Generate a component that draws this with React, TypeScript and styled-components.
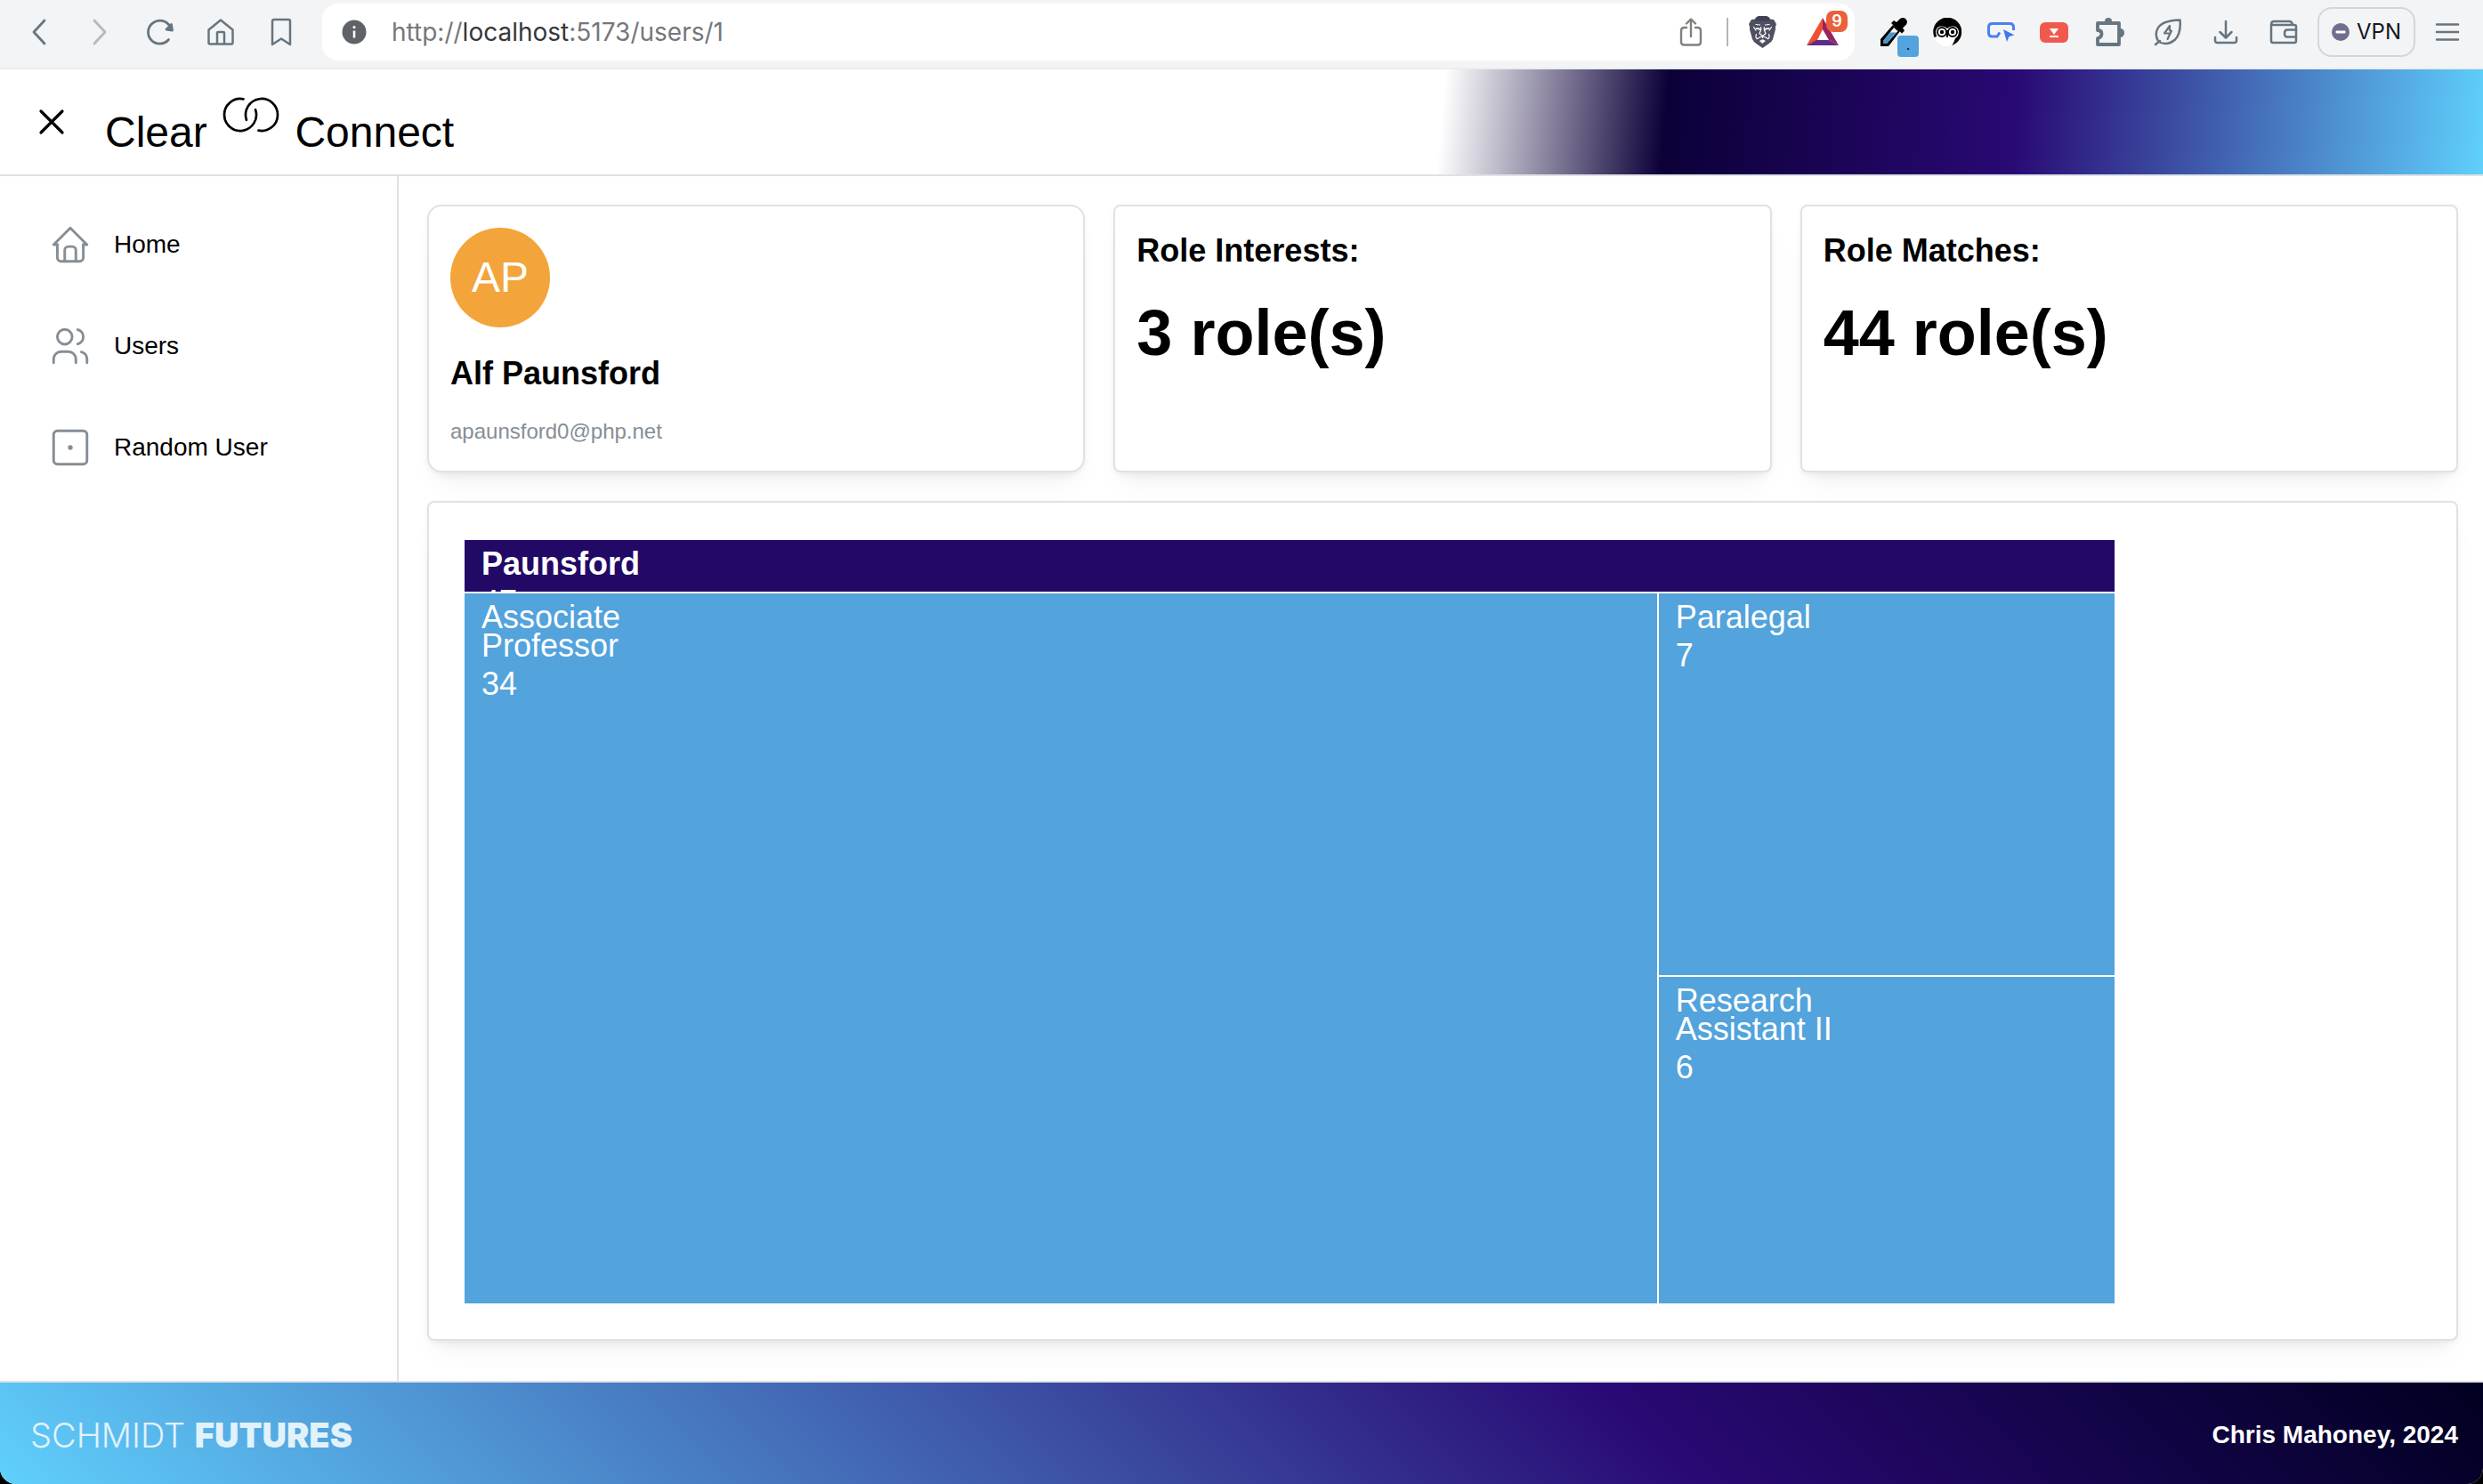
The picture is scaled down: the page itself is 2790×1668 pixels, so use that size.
import React from "react";
import styled, { createGlobalStyle } from "styled-components";

const GlobalStyle = createGlobalStyle`
  *, *::before, *::after { box-sizing: border-box; }
  html { background: #000; }
  body {
    margin: 0;
    font-family: "Liberation Sans", Arial, Helvetica, sans-serif;
    color: #000;
  }
  button { font: inherit; color: inherit; background: none; border: 0; padding: 0; cursor: pointer; }
  svg { display: block; }
`;

const line = "#dee2e6";
const chrome = "#66757f";

/* ---------- window ---------- */

const Window = styled.div`
  display: flex;
  flex-direction: column;
  min-height: 100vh;
  background: #fff;
  border-radius: 0 0 18px 18px;
  overflow: hidden;
`;

const Toolbar = styled.nav`
  display: flex;
  align-items: center;
  height: 78px;
  padding: 4px 4px 8px 10px;
  background: #f3f4f6;
  border-bottom: 2px solid #ecedf0;
  color: ${chrome};
  font-family: Inter, "Liberation Sans", sans-serif;
`;

const ToolButton = styled.button<{ $width?: number; $faded?: boolean }>`
  display: flex;
  align-items: center;
  justify-content: center;
  position: relative;
  flex: none;
  width: ${(p) => p.$width ?? 68}px;
  height: 64px;
  opacity: ${(p) => (p.$faded ? 0.45 : 1)};
`;

const AddressBar = styled.div`
  display: flex;
  align-items: center;
  flex: 1;
  min-width: 0;
  height: 64px;
  margin: 0 14px 0 12px;
  padding: 0 2px 0 22px;
  background: #fff;
  border-radius: 18px;
`;

const Url = styled.div`
  flex: 1;
  min-width: 0;
  margin-left: 28px;
  overflow: hidden;
  white-space: nowrap;
  font-size: 28px;
  line-height: 36px;
  color: #75777a;
  outline: none;
`;

const Host = styled.span`
  color: #36383b;
`;

const BarDivider = styled.span`
  width: 2px;
  height: 32px;
  margin: 0 4px 0 6px;
  background: #b6b6b6;
`;

const CountBadge = styled.span`
  position: absolute;
  top: 8px;
  right: 6px;
  width: 24px;
  height: 24px;
  border-radius: 8px;
  background: #e8613c;
  color: #fff;
  font-size: 18px;
  font-weight: 600;
  line-height: 24px;
  text-align: center;
`;

const ColorBadge = styled.span`
  position: absolute;
  right: 2px;
  bottom: 4px;
  width: 24px;
  height: 24px;
  border-radius: 4px;
  background: #53a3dc;
  color: #111;
  font-size: 16px;
  line-height: 20px;
  text-align: center;
`;

const VpnButton = styled.button`
  display: flex;
  align-items: center;
  justify-content: center;
  gap: 8px;
  width: 110px;
  height: 56px;
  margin-left: 6px;
  border: 2px solid #cfd8dd;
  border-radius: 16px;
  color: #15171c;
  font-size: 24px;
  line-height: 32px;
`;

/* ---------- application ---------- */

const Header = styled.header`
  display: flex;
  align-items: center;
  gap: 38px;
  height: 120px;
  padding: 0 36px;
  border-bottom: 2px solid ${line};
  background: linear-gradient(95deg, #fff 58%, #0c0038 67%, #290974 81%, #5fd0fc 100%);
  background-clip: padding-box;
`;

const CloseButton = styled.button`
  display: flex;
  align-items: center;
  justify-content: center;
  width: 44px;
  height: 44px;
`;

const Brand = styled.h1`
  margin: 0;
  font-size: 48px;
  font-weight: 400;
  line-height: 64px;
  white-space: nowrap;

  svg { display: inline-block; vertical-align: baseline; }
`;

const Body = styled.div`
  display: grid;
  grid-template-columns: 448px minmax(0, 1fr);
  flex: 1;
`;

const Sidebar = styled.aside`
  padding: 20px 0;
  border-right: 2px solid ${line};
`;

const NavLink = styled.a`
  display: flex;
  align-items: center;
  gap: 24px;
  height: 114px;
  padding: 0 54px;
  color: #000;
  font-size: 28px;
  line-height: 40px;
  text-decoration: none;

  svg { color: #868e96; }
`;

const Main = styled.main`
  display: flex;
  flex-direction: column;
  gap: 32px;
  padding: 32px 28px 45px 32px;
`;

const CardRow = styled.div`
  display: grid;
  grid-template-columns: repeat(3, minmax(0, 1fr));
  gap: 32px;
`;

const Card = styled.section<{ $radius?: number }>`
  padding: 24px;
  background: #fff;
  border: 2px solid ${line};
  border-radius: ${(p) => p.$radius ?? 8}px;
  box-shadow:
    0 2px 6px rgba(0, 0, 0, 0.05),
    0 20px 30px -10px rgba(0, 0, 0, 0.05),
    0 14px 14px -10px rgba(0, 0, 0, 0.04);
`;

const Avatar = styled.div`
  display: flex;
  align-items: center;
  justify-content: center;
  width: 112px;
  height: 112px;
  border-radius: 50%;
  background: #f3a43a;
  color: #fff;
  font-size: 48px;
  line-height: 56px;
`;

const CardTitle = styled.h2<{ $spaced?: boolean }>`
  margin: ${(p) => (p.$spaced ? 26 : 0)}px 0 19px;
  font-size: 36px;
  font-weight: 700;
  line-height: 52px;
`;

const Email = styled.p`
  margin: 0;
  color: #868e96;
  font-size: 24px;
  line-height: 40px;
`;

const Figure = styled.p`
  margin: 0;
  font-size: 72px;
  font-weight: 700;
  line-height: 94px;
`;

const ChartCard = styled(Card)`
  display: flex;
  flex: 1;
  padding: 42px 40px 40px;
`;

const Treemap = styled.div`
  display: grid;
  grid-template-columns: 34fr 13fr;
  grid-template-rows: 58px 7fr 6fr;
  gap: 2px;
  flex: 1;
  max-width: 1854px;
`;

const Tile = styled.div<{ $kind: "root" | "tall" | "leaf" }>`
  min-height: 0;
  padding: 11px 19px;
  overflow: hidden;
  color: #fff;
  font-size: 36px;
  line-height: 32px;
  background: ${(p) => (p.$kind === "root" ? "#230966" : "#53a3dc")};
  grid-column: ${(p) => (p.$kind === "root" ? "1 / -1" : "auto")};
  grid-row: ${(p) => (p.$kind === "tall" ? "span 2" : "auto")};
`;

const TileLabel = styled.div<{ $bold?: boolean }>`
  max-width: 200px;
  margin-bottom: 11px;
  font-weight: ${(p) => (p.$bold ? 700 : 400)};
`;

const Footer = styled.footer`
  display: flex;
  align-items: center;
  justify-content: space-between;
  height: 116px;
  padding: 4px 28px 0 34px;
  border-top: 2px solid ${line};
  background: linear-gradient(45deg, #5fd0fc 0%, #290974 66%, #000020 100%);
  background-clip: padding-box;
  color: #fff;
`;

const FooterLogo = styled.div`
  color: #e1f2fb;
  font-family: Inter, "Liberation Sans", sans-serif;
  font-size: 38px;
  font-weight: 300;
  line-height: 44px;

  strong { font-weight: 900; }
`;

const Credit = styled.div`
  font-size: 28px;
  font-weight: 700;
  line-height: 40px;
`;

/* ---------- drawings ---------- */

type StrokeProps = {
  w: number;
  h: number;
  box?: string;
  sw?: number;
  children: React.ReactNode;
};

const Stroke = ({ w, h, box, sw = 2.5, children }: StrokeProps) => (
  <svg
    width={w}
    height={h}
    viewBox={box ?? `0 0 ${w} ${h}`}
    fill="none"
    stroke="currentColor"
    strokeWidth={sw}
    strokeLinecap="round"
    strokeLinejoin="round"
    aria-hidden
  >
    {children}
  </svg>
);

const Lion = () => (
  <svg width="31" height="36" viewBox="0 0 31 36" aria-hidden>
    <path d="M8.500 1.500 11 0h9l2.500 1.500L24 3.500l4 .5 3 5-1 3v3l-3 11q-1 3-5 5.500L15.500 36 9 31.500Q5 29 4 26L1 15v-3L0 9l3-5 4-.5Z" fill="#4f5062" />
    <path d="M8.500 1.500 11 0h9l2.500 1.500L24 3.500l-2 2H9l-2-2Z" fill="#3f4154" />
    <g fill="none" stroke="#fff" strokeWidth="1.200" strokeLinecap="round" strokeLinejoin="round">
      <path d="M8 9.500l4.500.5M23 9.500l-4.500.5" />
      <path d="M5.500 12.500 8 16M25.500 12.500 23 16" />
      <path d="M8.500 14.200q2.500-.4 4.500 1M22.500 14.200q-2.500-.4-4.500 1" strokeWidth="1.800" />
      <path d="M13.700 12.500v3l-1.700 4.200 3.500 2.800 3.500-2.800-1.700-4.200v-3" />
      <path d="M15.500 22.500v2M8.500 20.500q-1.500 3.500.8 5.200l2.200-1.400 4 -1.500 4 1.500 2.200 1.400q2.300-1.700.8-5.200" />
      <path d="M12.500 28l3-1.600 3 1.600-3 2.400Z" fill="#fff" strokeWidth=".6" />
    </g>
  </svg>
);

const Triangle = () => (
  <svg width="36" height="32" viewBox="0 0 36 32" aria-hidden>
    <path d="M18 0 0 31l12-6 6-12Z" fill="#f0502f" />
    <path d="M18 0v13l7 12 11 6Z" fill="#96245f" />
    <path d="M0 31h36l-11-6H11Z" fill="#5f2c88" />
  </svg>
);

const Eyedropper = () => (
  <svg width="30" height="32" viewBox="0 0 30 32" aria-hidden>
    <path d="M0 24 14 8l8 7L9 32H0Z" fill="#000" />
    <path d="M15 11l4.500 4L7 29H3.500v-3.500Z" fill="#f3f4f6" />
    <path d="M10.500 16.500h7.500L7 29H3.500v-3.500Z" fill="#4a95c9" />
    <path d="m12 6 3-3 3 2 4-4q4-2 6.500.5t.5 6l-4 4 2 3-3 3Z" fill="#000" />
  </svg>
);

const Owl = () => (
  <svg width="32" height="32" viewBox="0 0 32 32" aria-hidden>
    <circle cx="16" cy="16" r="16" fill="#fff" />
    <path d="M1.500 22A16 16 0 1 1 21 31q4-5 4-10H7q-2-1-4 .5Z" fill="#000" />
    <path d="M3 15q2-7 10-5l3 2 3-2q8-2 10 5 0 8-7 9l-6-1-6 1q-7-1-7-9Z" fill="#fff" />
    <g fill="none" stroke="#000" strokeWidth="1.800">
      <circle cx="10" cy="16" r="5" />
      <circle cx="22" cy="16" r="5" />
    </g>
    <circle cx="10" cy="16" r="2.200" />
    <circle cx="22" cy="16" r="2.200" />
    <path d="M16 14v8" stroke="#000" strokeWidth="2" />
    <path d="M5 23h18v5q-3 4-8 4-7-1-11-7Z" fill="#fff" />
  </svg>
);

const TrackerIcon = () => (
  <svg width="31" height="22" viewBox="0 0 31 22" fill="none" aria-hidden>
    <path d="M14 11.500 11 16H5.500Q1.500 16 1.500 12V5.500Q1.500 1.500 5.500 1.500h20q4 0 4 4V9" stroke="#4a80f0" strokeWidth="3" />
    <path d="m18 8 12.500 6.500-6 1.500-2.500 6Z" fill="#3e77f0" />
  </svg>
);

const SaveVideo = () => (
  <svg width="32" height="23" viewBox="0 0 32 23" aria-hidden>
    <rect width="32" height="23" rx="6" fill="#f05a4e" />
    <path d="M11 7h10l-5 7ZM11 15h10v2H11Z" fill="#fff" />
  </svg>
);

const HomeIcon = () => (
  <Stroke w={50} h={50} box="0 0 24 24" sw={1.4}>
    <path d="M5 12H3l9-9 9 9h-2" />
    <path d="M5 12v7a2 2 0 0 0 2 2h10a2 2 0 0 0 2-2v-7" />
    <path d="M9 21v-6a2 2 0 0 1 2-2h2a2 2 0 0 1 2 2v6" />
  </Stroke>
);

const UsersIcon = () => (
  <Stroke w={50} h={50} box="0 0 24 24" sw={1.4}>
    <circle cx="9" cy="7" r="4" />
    <path d="M3 21v-2a4 4 0 0 1 4-4h4a4 4 0 0 1 4 4v2" />
    <path d="M16 3.130a4 4 0 0 1 0 7.750M21 21v-2a4 4 0 0 0-3-3.850" />
  </Stroke>
);

const DiceIcon = () => (
  <Stroke w={50} h={50} box="0 0 24 24" sw={1.4}>
    <rect x="3" y="3" width="18" height="18" rx="2" />
    <circle cx="12" cy="12" r=".6" fill="currentColor" />
  </Stroke>
);

const RingsIcon = () => (
  <Stroke w={72} h={72} box="0 0 24 24" sw={0.9}>
    <path d="M9.183 6.117a6 6 0 1 0 4.511 3.986" />
    <path d="M14.813 17.883a6 6 0 1 0-4.496-3.954" />
  </Stroke>
);

/* ---------- data ---------- */

const links = [
  { label: "Home", href: "/", icon: <HomeIcon /> },
  { label: "Users", href: "/users", icon: <UsersIcon /> },
  { label: "Random User", href: "/users/random", icon: <DiceIcon /> },
];

const tiles: { label: string; value: number; kind: "root" | "tall" | "leaf" }[] = [
  { label: "Paunsford", value: 47, kind: "root" },
  { label: "Associate Professor", value: 34, kind: "tall" },
  { label: "Paralegal", value: 7, kind: "leaf" },
  { label: "Research Assistant II", value: 6, kind: "leaf" },
];

const BrowserBar = () => (
  <Toolbar aria-label="Browser">
    <ToolButton aria-label="Back">
      <Stroke w={16} h={30} sw={2.8}><path d="M14 2 2 15l12 13" /></Stroke>
    </ToolButton>
    <ToolButton aria-label="Forward" $faded>
      <Stroke w={16} h={30} sw={2.8}><path d="m2 2 12 13L2 28" /></Stroke>
    </ToolButton>
    <ToolButton aria-label="Reload">
      <Stroke w={32} h={32} sw={2.8}>
        <path d="M25.500 24.500A13 13 0 1 1 27 10" />
        <path d="m28.500 7.500 1 6.500-6.500-.8Z" fill="currentColor" />
      </Stroke>
    </ToolButton>
    <ToolButton aria-label="Home page">
      <Stroke w={30} h={30}>
        <path d="M1.500 12.500 15 1.500l13.500 11V27q0 1.500-1.500 1.500H3q-1.500 0-1.500-1.500Z" />
        <path d="M11 28V16q0-1 1-1h6q1 0 1 1v12" />
      </Stroke>
    </ToolButton>
    <ToolButton aria-label="Bookmark">
      <Stroke w={24} h={32}>
        <path d="M2 4q0-2 2-2h16q2 0 2 2v26l-10-6.500L2 30Z" />
      </Stroke>
    </ToolButton>

    <AddressBar>
      <svg width="28" height="28" viewBox="0 0 28 28" aria-hidden>
        <circle cx="14" cy="14" r="13.500" fill="#5f6368" />
        <circle cx="14" cy="8.500" r="1.600" fill="#fff" />
        <path d="M14 12.500v8" stroke="#fff" strokeWidth="2.600" />
      </svg>
      <Url role="textbox" aria-label="Address" contentEditable suppressContentEditableWarning spellCheck={false}>
        http://<Host>localhost</Host>:5173/users/1
      </Url>
      <ToolButton aria-label="Share">
        <svg width="26" height="32" viewBox="0 0 26 32" fill="none" stroke="#80807d" strokeWidth="2.400" strokeLinecap="round" strokeLinejoin="round" aria-hidden>
          <path d="M8 11H5.500Q2 11 2 14.500V27q0 3.500 3.500 3.500h15q3.500 0 3.500-3.500V14.500Q24 11 20.500 11H18M13 21V2M8 6.500l5-5 5 5" />
        </svg>
      </ToolButton>
      <BarDivider />
      <ToolButton aria-label="Shields"><Lion /></ToolButton>
      <ToolButton aria-label="Rewards">
        <Triangle />
        <CountBadge>9</CountBadge>
      </ToolButton>
    </AddressBar>

    <ToolButton aria-label="Colour picker" $width={60}>
      <Eyedropper />
      <ColorBadge>.</ColorBadge>
    </ToolButton>
    <ToolButton aria-label="Owl extension" $width={60}><Owl /></ToolButton>
    <ToolButton aria-label="Click tracker" $width={60}><TrackerIcon /></ToolButton>
    <ToolButton aria-label="Save video" $width={60}><SaveVideo /></ToolButton>
    <ToolButton aria-label="Extensions" $width={65}>
      <Stroke w={34} h={34} sw={3.8}>
        <path d="M3 7h24v24H3v-7q4.500-1 4.500-5T3 15Z" />
        <path d="M12 5q0-3 3-3t3 3ZM29 14q3 1 3 4t-3 4Z" fill="currentColor" strokeWidth="2" />
      </Stroke>
    </ToolButton>
    <ToolButton aria-label="Energy saver" $width={65}>
      <Stroke w={32} h={32}>
        <path d="M2 30l5-4M5.500 27Q.5 19 4.500 12 9 3 29.500 2.500 31 17 24 24.500 15.500 32 5.500 27Z" />
        <path d="m18 9-6 8.500h6.500L15.500 24M18 9v5.500h2L16 23" strokeWidth="2.200" />
      </Stroke>
    </ToolButton>
    <ToolButton aria-label="Downloads" $width={65}>
      <Stroke w={28} h={28}>
        <path d="M14 2v18M7.500 14l6.500 6.500 6.500-6.500M2 20v3.500Q2 26 4.500 26h19q2.500 0 2.500-2.500V20" />
      </Stroke>
    </ToolButton>
    <ToolButton aria-label="Wallet" $width={65}>
      <Stroke w={32} h={28}>
        <path d="M2 6v18q0 2 2 2h24q2 0 2-2V8q0-2-2-2H2q0-4 3-4h17q3.500 0 4 4" />
        <path d="M30 11.500H20q-3 0-3 4t3 4h10" />
      </Stroke>
    </ToolButton>
    <VpnButton>
      <svg width="20" height="20" viewBox="0 0 20 20" aria-hidden>
        <circle cx="10" cy="10" r="10" fill="#6f6f8d" />
        <rect x="4.500" y="8.600" width="11" height="2.800" rx="1" fill="#fff" />
      </svg>
      VPN
    </VpnButton>
    <ToolButton aria-label="Menu" $width={72}>
      <Stroke w={28} h={20}><path d="M2 1.500h24M2 10h24M2 18.500h24" /></Stroke>
    </ToolButton>
  </Toolbar>
);

export default function App() {
  return (
    <Window>
      <GlobalStyle />
      <BrowserBar />

      <Header>
        <CloseButton aria-label="Close navigation">
          <Stroke w={30} h={30} sw={3.2}><path d="m3 3 24 24M27 3 3 27" /></Stroke>
        </CloseButton>
        <Brand>
          Clear <RingsIcon /> Connect
        </Brand>
      </Header>

      <Body>
        <Sidebar>
          <nav aria-label="Main">
            {links.map((l) => (
              <NavLink key={l.label} href={l.href}>
                {l.icon}
                {l.label}
              </NavLink>
            ))}
          </nav>
        </Sidebar>

        <Main>
          <CardRow>
            <Card $radius={16}>
              <Avatar>AP</Avatar>
              <CardTitle $spaced>Alf Paunsford</CardTitle>
              <Email>apaunsford0@php.net</Email>
            </Card>
            <Card>
              <CardTitle>Role Interests:</CardTitle>
              <Figure>3 role(s)</Figure>
            </Card>
            <Card>
              <CardTitle>Role Matches:</CardTitle>
              <Figure>44 role(s)</Figure>
            </Card>
          </CardRow>

          <ChartCard>
            <Treemap>
              {tiles.map((t) => (
                <Tile key={t.label} $kind={t.kind}>
                  <TileLabel $bold={t.kind === "root"}>{t.label}</TileLabel>
                  <div>{t.value}</div>
                </Tile>
              ))}
            </Treemap>
          </ChartCard>
        </Main>
      </Body>

      <Footer>
        <FooterLogo>
          SCHMIDT <strong>FUTURES</strong>
        </FooterLogo>
        <Credit>Chris Mahoney, 2024</Credit>
      </Footer>
    </Window>
  );
}
